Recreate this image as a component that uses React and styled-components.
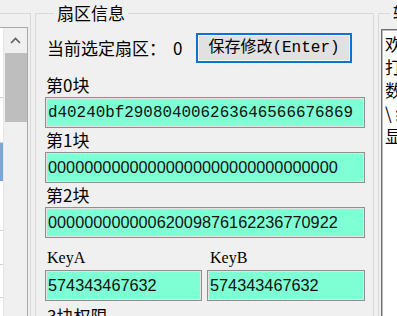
import React from "react";
import styled, { createGlobalStyle } from "styled-components";

const cjk = `"Noto Sans CJK SC", sans-serif`;

const GlobalStyle = createGlobalStyle`
    html, body {
        margin: 0;
        padding: 0;
        background: #f0f0f0;
        overflow: hidden;
    }
`;

const Page = styled.div`
    display: flex;
    width: 397px;
    height: 316px;
    padding-top: 3px;
    box-sizing: border-box;
    overflow: hidden;
    font-family: ${cjk};
    color: #000;
`;

const LeftPanel = styled.div`
    flex-shrink: 0;
    width: 31px;
    margin-top: 10px;
    box-sizing: border-box;
    border-top: 1px solid #d9d9d9;
    border-right: 1px solid #d9d9d9;
    padding: 13px 2px 0 0;
`;

const ListBox = styled.div`
    display: flex;
    height: 100%;
    box-sizing: border-box;
    border-top: 1px solid #a8a8a8;
    border-right: 1px solid #a8a8a8;
`;

const ListItems = styled.div`
    width: 3px;
    background: #fff;
    border-right: 1px solid #e6e6e6;
    display: flex;
    flex-direction: column;
`;

const ListItem = styled.div`
    height: ${p => p.$h}px;
    flex-shrink: 0;
    background: ${p => (p.$selected ? "#7aa6da" : "transparent")};
    border-bottom: 1px solid ${p => (p.$selected ? "#7aa6da" : "#d0d0d0")};
    box-sizing: border-box;
`;

const ScrollBar = styled.div`
    flex: 1;
    background: #f0f0f0;
    display: flex;
    flex-direction: column;
    align-items: center;
`;

const ArrowBtn = styled.div`
    height: 25px;
    width: 100%;
    display: flex;
    align-items: center;
    justify-content: center;
`;

const Thumb = styled.div`
    width: 22px;
    height: 69px;
    background: #bebebe;
`;

const Group = styled.fieldset`
    margin: 0 0 0 4px;
    min-width: 0;
    flex-shrink: 0;
    border: 1px solid #d9d9d9;
    padding: ${p => p.$pad};
    width: ${p => p.$w}px;
    box-sizing: border-box;
    height: 340px;
`;

const Title = styled.legend`
    margin-left: 9px;
    padding: 0 3px;
    font-size: 17px;
    line-height: 20px;
`;

const TopRow = styled.div`
    display: grid;
    grid-template-columns: 151px 156px;
    align-items: center;
    height: 30px;
    margin-bottom: 10px;
`;

const Label = styled.div`
    font-size: 17px;
    line-height: 20px;
    padding: ${p => p.$top || 2}px 0 2px ${p => p.$indent || 1}px;
    white-space: nowrap;
`;

const Zero = styled.span`
    margin-left: 7px;
`;

const SaveButton = styled.button`
    height: 30px;
    width: 156px;
    box-sizing: border-box;
    border: 2px solid #0a74d6;
    box-shadow: inset 0 0 0 1px #f4f4f4;
    background: #e1e1e1;
    padding: 0;
    font-family: "Liberation Mono", ${cjk};
    font-size: 16px;
    line-height: 20px;
    color: #000;
    white-space: nowrap;
`;

const Field = styled.input`
    display: block;
    width: 100%;
    height: 31px;
    box-sizing: border-box;
    margin: 0;
    border: 1px solid #8f8f8f;
    box-shadow: inset 0 0 0 1px #e4e4e4;
    background: #7fffd4;
    padding: 0 0 0 2px;
    outline: none;
    color: #111;
    font-family: ${p => (p.$mono ? `"Liberation Mono", monospace` : `"Liberation Sans", sans-serif`)};
    font-size: ${p => (p.$mono ? "15.9px" : "16.3px")};
`;

const KeyRow = styled.div`
    display: grid;
    grid-template-columns: 157px 158px;
    column-gap: 5px;
    margin-top: 8px;
`;

const KeyLabel = styled(Label)`
    font-family: "Liberation Serif", serif;
    font-size: 16px;
`;

const LogBox = styled.div`
    height: 300px;
    box-sizing: border-box;
    background: #fff;
    border: 1px solid #6f6f6f;
    box-shadow: inset 0 0 0 1px #b9b9b9;
    padding: 2px 3px;
    font-size: 17px;
    line-height: 23px;
    white-space: nowrap;
    overflow: hidden;
`;

const blocks = [
    { name: "第0块", value: "d40240bf290804006263646566676869", mono: true },
    { name: "第1块", value: "00000000000000000000000000000000" },
    { name: "第2块", value: "00000000000062009876162236770922" },
];

const logLines = [
    "欢迎使用M1卡读写工具",
    "打开串口成功",
    "数据格式：十六进制",
    "\\ 结尾自动换行",
    "显示扇区0数据",
];

function App() {
    return (
        <>
            <GlobalStyle />
            <Page>
                <LeftPanel>
                    <ListBox>
                        <ListItems>
                            <ListItem $h={70} />
                            <ListItem $h={45} />
                            <ListItem $h={38} $selected />
                            <ListItem $h={50} />
                            <ListItem $h={34} />
                            <ListItem $h={33} />
                        </ListItems>
                        <ScrollBar>
                            <ArrowBtn>
                                <svg width="11" height="7" viewBox="0 0 11 7">
                                    <polyline points="1,6 5.5,1.5 10,6" fill="none" stroke="#5f5f5f" strokeWidth="1.6" />
                                </svg>
                            </ArrowBtn>
                            <Thumb />
                        </ScrollBar>
                    </ListBox>
                </LeftPanel>

                <Group $w={339} $pad="10px 8px 0 9px">
                    <Title>扇区信息</Title>
                    <TopRow>
                        <Label $indent={2}>当前选定扇区：<Zero>0</Zero></Label>
                        <SaveButton>保存修改(Enter)</SaveButton>
                    </TopRow>
                    {blocks.map(b => (
                        <div key={b.name}>
                            <Label>{b.name}</Label>
                            <Field readOnly value={b.value} $mono={b.mono} />
                        </div>
                    ))}
                    <KeyRow>
                        <div>
                            <KeyLabel $indent={2}>KeyA</KeyLabel>
                            <Field readOnly value="574343467632" />
                        </div>
                        <div>
                            <KeyLabel $indent={3}>KeyB</KeyLabel>
                            <Field readOnly value="574343467632" />
                        </div>
                    </KeyRow>
                    <Label $indent={2} $top={5}>3块权限</Label>
                </Group>

                <Group $w={160} $pad="6px 0 0 2px">
                    <Title>辅助信息</Title>
                    <LogBox>
                        {logLines.map(l => (
                            <div key={l}>{l}</div>
                        ))}
                    </LogBox>
                </Group>
            </Page>
        </>
    );
}

export default App;
